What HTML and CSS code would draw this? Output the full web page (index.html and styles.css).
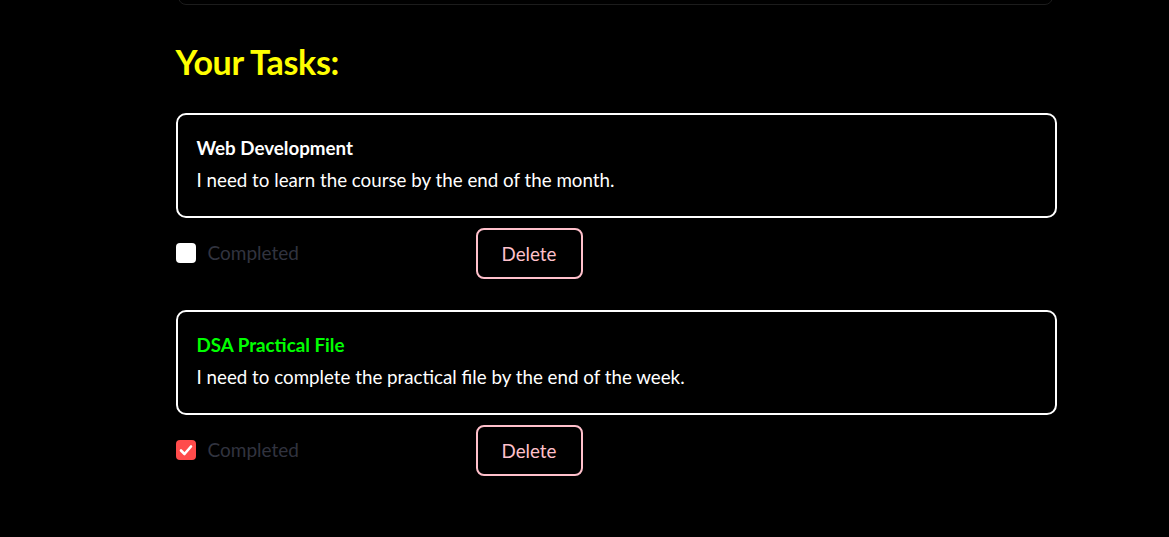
FILE: index.html
```html
<!DOCTYPE html>
<html>
<head>
<meta charset="utf-8">
<link rel="stylesheet" href="styles.css">
</head>
<body>
<div class="main">
  <div class="topbox"></div>
  <h2 class="heading">Your Tasks:</h2>

  <div class="task">
    <div class="card">
      <div class="card-title">Web Development</div>
      <div class="card-desc">I need to learn the course by the end of the month.</div>
    </div>
    <div class="row">
      <label class="check">
        <span class="box"></span>
        <span class="label">Completed</span>
      </label>
      <button class="del">Delete</button>
    </div>
  </div>

  <div class="task">
    <div class="card">
      <div class="card-title done">DSA Practical File</div>
      <div class="card-desc">I need to complete the practical file by the end of the week.</div>
    </div>
    <div class="row">
      <label class="check">
        <span class="box checked"><svg viewBox="0 0 20 20" width="20" height="20"><path d="M5 10.5 L8.5 14 L15 6.5" fill="none" stroke="#fff" stroke-width="2.6" stroke-linecap="round" stroke-linejoin="round"/></svg></span>
        <span class="label">Completed</span>
      </label>
      <button class="del">Delete</button>
    </div>
  </div>
</div>
</body>
</html>
```

FILE: styles.css
```css
html, body {
  margin: 0;
  padding: 0;
  background: #000;
  height: 100%;
  overflow: hidden;
}
body {
  font-family: "Source Sans Pro", "Lato", "Noto Sans", sans-serif;
  color: #fff;
}
.main {
  width: 881px;
  margin: 0 auto;
  padding-left: 1px;
  box-sizing: content-box;
  position: relative;
  left: 31px;
}
.topbox {
  margin: -40px 0 0 2px;
  width: 875px;
  height: 45px;
  border: 1px solid #1c1c1c;
  border-radius: 8px;
  box-sizing: border-box;
}
.heading {
  margin: 35px 0 0 0;
  color: #ffff00;
  font-size: 34px;
  font-weight: 700;
  line-height: 44px;
  height: 44px;
  letter-spacing: -0.3px;
}
.task {
  margin-top: 29px;
}
.task + .task {
  margin-top: 31px;
}
.card {
  border: 2px solid #fff;
  border-radius: 10px;
  height: 105px;
  box-sizing: border-box;
  padding: 18px 19px 0 19px;
}
.card-title {
  font-size: 18.75px;
  font-weight: 700;
  line-height: 30px;
}
.card-title.done {
  color: #00ff00;
}
.card-desc {
  font-size: 18.75px;
  line-height: 30px;
  margin-top: 2px;
}
.row {
  display: flex;
  align-items: center;
  margin-top: 10px;
  height: 51px;
}
.check {
  display: flex;
  align-items: center;
  gap: 12px;
  width: 300px;
}
.box {
  width: 20px;
  height: 20px;
  border-radius: 4px;
  background: #fff;
  display: block;
  margin-top: -2px;
}
.box.checked {
  background: #ff4b4b;
}
.box svg {
  display: block;
}
.label {
  color: #31333f;
  font-size: 19px;
  margin-top: -2px;
}
.del {
  width: 107px;
  height: 51px;
  background: #000;
  border: 2px solid #ffc0cb;
  border-radius: 8px;
  color: #ffc0cb;
  font-family: inherit;
  font-size: 18.75px;
  padding: 0;
  cursor: pointer;
}
```
